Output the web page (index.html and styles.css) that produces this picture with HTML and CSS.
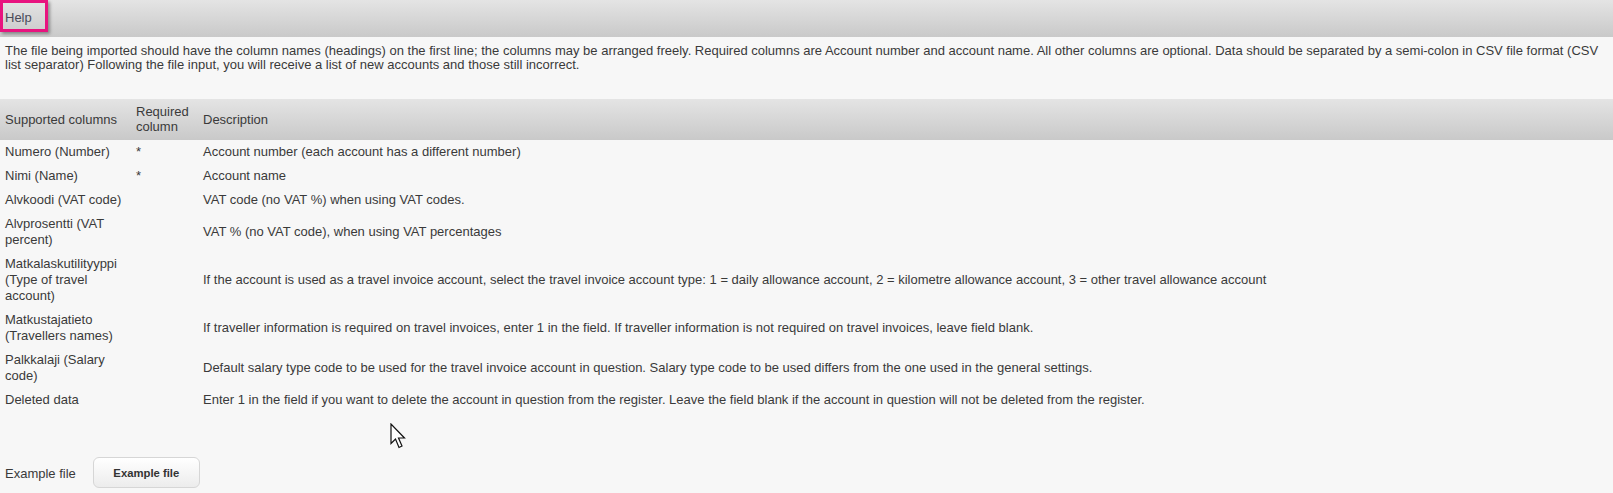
FILE: index.html
```html
<!DOCTYPE html>
<html>
<head>
<meta charset="utf-8">
<link rel="stylesheet" href="styles.css">
</head>
<body>
<div class="bar">
  <span class="bar-title">Help</span>
  <span class="highlight"></span>
</div>
<p class="intro">The file being imported should have the column names (headings) on the first line; the columns may be arranged freely. Required columns are Account number and account name. All other columns are optional. Data should be separated by a semi-colon in CSV file format (CSV list separator) Following the file input, you will receive a list of new accounts and those still incorrect.</p>
<table class="cols">
  <colgroup><col class="c1"><col class="c2"><col class="c3"></colgroup>
  <thead>
    <tr><th>Supported columns</th><th>Required column</th><th>Description</th></tr>
  </thead>
  <tbody>
    <tr><td>Numero (Number)</td><td>*</td><td>Account number (each account has a different number)</td></tr>
    <tr><td>Nimi (Name)</td><td>*</td><td>Account name</td></tr>
    <tr><td>Alvkoodi (VAT code)</td><td></td><td>VAT code (no VAT %) when using VAT codes.</td></tr>
    <tr><td>Alvprosentti (VAT percent)</td><td></td><td>VAT % (no VAT code), when using VAT percentages</td></tr>
    <tr><td>Matkalaskutilityyppi (Type of travel account)</td><td></td><td>If the account is used as a travel invoice account, select the travel invoice account type: 1 = daily allowance account, 2 = kilometre allowance account, 3 = other travel allowance account</td></tr>
    <tr><td>Matkustajatieto (Travellers names)</td><td></td><td>If traveller information is required on travel invoices, enter 1 in the field. If traveller information is not required on travel invoices, leave field blank.</td></tr>
    <tr><td>Palkkalaji (Salary code)</td><td></td><td>Default salary type code to be used for the travel invoice account in question. Salary type code to be used differs from the one used in the general settings.</td></tr>
    <tr><td>Deleted data</td><td></td><td>Enter 1 in the field if you want to delete the account in question from the register. Leave the field blank if the account in question will not be deleted from the register.</td></tr>
  </tbody>
</table>
<div class="example">
  <span class="example-label">Example file</span>
  <button class="btn" type="button">Example file</button>
</div>
<svg class="cursor" width="16" height="27" viewBox="0 0 16 27"><path d="M1 1 L1 20.5 L5.5 16 L9 24.5 L12 23 L8.5 15 L14.5 15 Z" fill="#fff" stroke="#111" stroke-width="1.2" stroke-linejoin="miter"/></svg>
</body>
</html>
```
FILE: styles.css
```css
html, body {
  margin: 0;
  padding: 0;
  background: #f7f7f7;
  font-family: "Liberation Sans", Arial, sans-serif;
  font-size: 13px;
  color: #3a3a3a;
}
body { position: relative; min-height: 493px; }
.bar {
  position: relative;
  height: 37px;
  background: linear-gradient(to bottom, #e4e4e4 0%, #c9c9c9 100%);
  display: flex;
  align-items: center;
  padding-left: 5px;
}
.bar-title {
  margin-top: -3px;
  color: #4a4a5a;
}
.highlight {
  position: absolute;
  left: 0;
  top: 0;
  width: 42px;
  height: 26px;
  border: 3px solid #e8137f;
  box-shadow: 2px 2px 3px rgba(0,0,0,0.35);
}
.intro {
  margin: 0;
  padding: 7px 5px 0 5px;
  line-height: 14px;
  height: 55px;
}
.cols {
  width: 100%;
  border-collapse: collapse;
  table-layout: fixed;
}
.c1 { width: 131px; }
.c2 { width: 67px; }
.cols th {
  text-align: left;
  font-weight: normal;
  background: linear-gradient(to bottom, #e4e4e4 0%, #c9c9c9 100%);
  padding: 5px 5px 6px 5px;
  line-height: 15px;
  vertical-align: middle;
}
.cols td {
  padding: 4px 5px;
  line-height: 16px;
  vertical-align: middle;
}
.example {
  display: flex;
  align-items: center;
  padding: 45px 5px 0 5px;
  gap: 17px;
}
.example-label { margin-top: 1px; }
.btn {
  width: 107px;
  height: 31px;
  border: 1px solid #d6d6d6;
  border-radius: 6px;
  background: linear-gradient(to bottom, #ffffff 0%, #ececec 100%);
  font-family: "Liberation Sans", Arial, sans-serif;
  font-size: 11.3px;
  font-weight: bold;
  color: #333;
  padding: 0;
}
.cursor {
  position: absolute;
  left: 390px;
  top: 423px;
}
```
